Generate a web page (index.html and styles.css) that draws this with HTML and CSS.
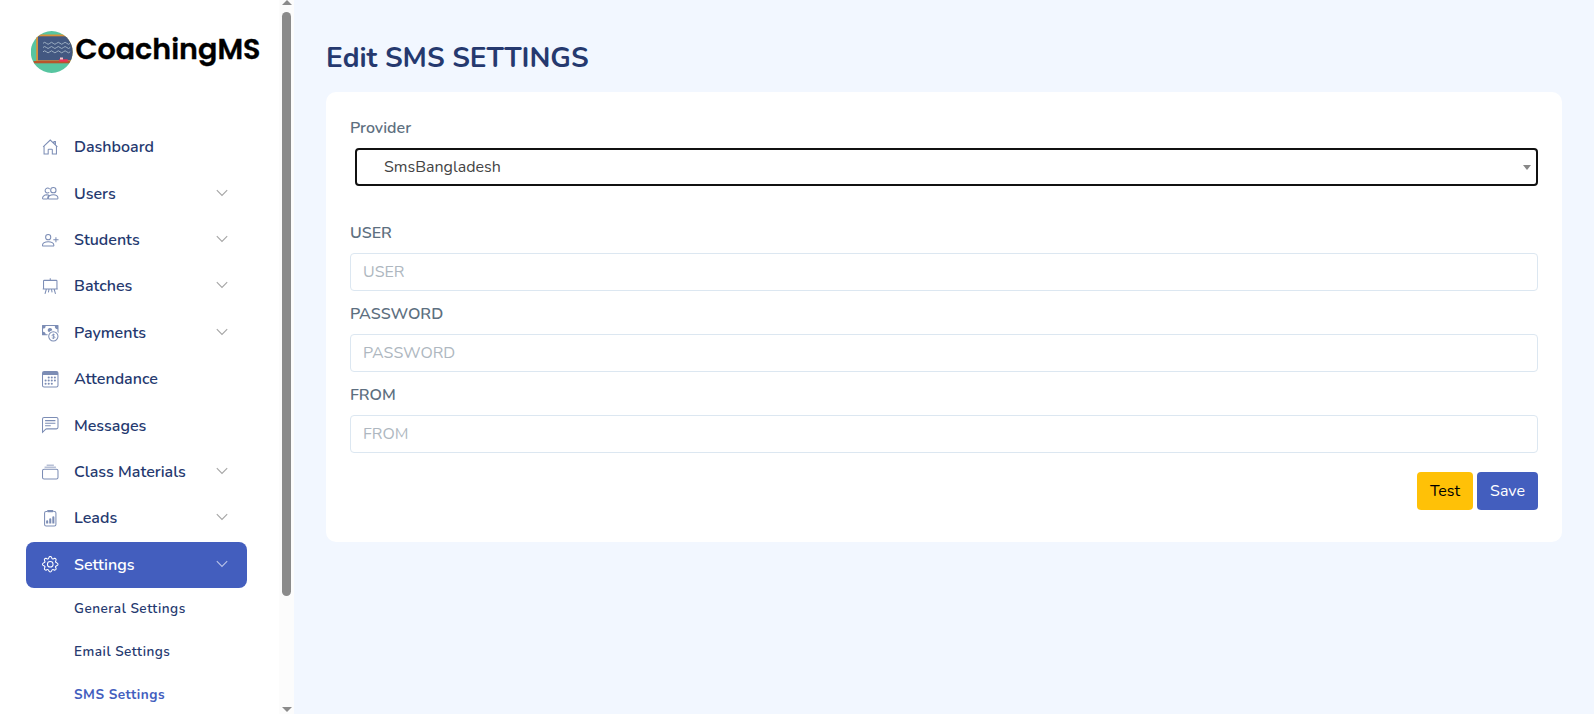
FILE: index.html
```html
<!DOCTYPE html>
<html lang="en">
<head>
<meta charset="utf-8">
<title>Edit SMS Settings - CoachingMS</title>
<link rel="stylesheet" href="styles.css">
</head>
<body>
<div class="app">
  <aside class="sidebar">
    <div class="side-content">
      <svg class="logo" width="232" height="44" viewBox="0 0 232 44">
        <defs><clipPath id="badge"><circle cx="20.700" cy="21" r="20.900"/></clipPath></defs>
        <g clip-path="url(#badge)">
          <rect width="42" height="42" fill="#57c5a0"/>
          <rect x="5.2" y="3.5" width="40" height="28" fill="#d99138"/>
          <rect x="7" y="5.300" width="38" height="24" fill="#435881"/>
          <rect x="2.500" y="30" width="36.500" height="2.300" fill="#b8552b"/>
          <rect x="28.200" y="28.300" width="8.500" height="2.400" fill="#ee3158"/>
          <rect x="29" y="26.500" width="3" height="2" fill="#f6c2ca"/>
          <path d="M12 12.300q1.700-2 3.400 0t3.400 0 3.400 0 3.400 0 3.400 0 3.400 0 3.400 0 3.400 0M12 16.500q1.700-2 3.400 0t3.400 0 3.400 0 3.400 0 3.400 0 3.400 0 3.400 0 3.400 0M12 20.800q1.700-2 3.400 0t3.400 0 3.400 0 3.400 0 3.400 0 3.400 0 3.400 0 3.400 0" fill="none" stroke="#9dafc2" stroke-width="1"/>
        </g>
        <text class="brand" x="44.500" y="28.400" textLength="185" lengthAdjust="spacingAndGlyphs">CoachingMS</text>
      </svg>
      <nav class="menu">
        <a class="item"><svg class="icon" viewBox="0 0 16 16"><path class="line" d="M1.100 7.600 8 1l6.900 6.600M2 6.800v7.700h4v-4q0-.6.600-.6h2.800q.6 0 .6.600v4h4V6.800M11.600 4V2.500h1.400v2.900"/></svg><span>Dashboard</span></a>
        <a class="item"><svg class="icon" viewBox="0 0 16 16"><g class="line"><circle cx="11" cy="5" r="2.600"/><path d="M6.500 13.500q-.5 0-.4-.8C6.400 10.700 8.500 9.500 11 9.500s4.300 1.200 4.500 3.200q0 .8-.5.800zM5.500 13.500H1q-.5 0-.5-.8C.8 10.800 2.300 9.600 4.600 9.400q1.300 0 2.200.5M7 7.200a2.400 2.400 0 1 1 .4-3.200M5.500 13.500q-.5-2 1.600-3.600"/></g></svg><span>Users</span><svg class="chev" viewBox="0 0 12 12"><path d="m.8 3.200 5.200 5.200 5.200-5.200"/></svg></a>
        <a class="item"><svg class="icon" viewBox="0 0 16 16"><g class="line"><circle cx="6" cy="5" r="2.500"/><path d="M1 13.500q-.6 0-.5-.9C.8 10.700 3.200 9.500 6 9.500s5.200 1.200 5.500 3.100q.1.900-.5.900zM13.500 5v5M11 7.500h5"/></g></svg><span>Students</span><svg class="chev" viewBox="0 0 12 12"><path d="m.8 3.200 5.200 5.200 5.200-5.200"/></svg></a>
        <a class="item"><svg class="icon" viewBox="0 0 16 16"><path class="line" d="M1.500 3q0-.7.700-.7h11.600q.7 0 .7.700v7q0 .7-.7.700H2.200q-.7 0-.7-.7zM8 .3v2M.7 10.700h14.600M4.200 10.900 2.900 15.300M6.800 10.900l-.6 3M9.200 10.900l.6 3M11.800 10.900l1.300 4.400"/></svg><span>Batches</span><svg class="chev" viewBox="0 0 12 12"><path d="m.8 3.200 5.200 5.200 5.200-5.200"/></svg></a>
        <a class="item"><svg class="icon" viewBox="0 0 16 16"><path d="M0 .5q0-.5.500-.5h15q.5 0 .5.500v7.400a6 6 0 0 0-1-1.100V4a2.500 2.500 0 0 1-2.500-3H3.500A2.500 2.500 0 0 1 1 3.500v3A2.500 2.500 0 0 1 3.500 9h2l-.3 1H.5Q0 10 0 9.500z"/><path d="M8 3a2.200 2.200 0 0 1 2 2.100A6 6 0 0 0 6.800 7 2.100 2.100 0 0 1 8 3"/><circle class="line" cx="11" cy="11" r="4.500"/><path class="line thin" d="M12.500 9.800C12 8.900 9.700 9 9.800 10.100c.2 1.100 2.700.6 2.700 1.900 0 1.100-2.500 1.100-3 .1M11.100 8.400v5.200"/></svg><span>Payments</span><svg class="chev" viewBox="0 0 12 12"><path d="m.8 3.200 5.200 5.200 5.200-5.200"/></svg></a>
        <a class="item"><svg class="icon" viewBox="0 0 16 16"><path fill-rule="evenodd" d="M2 0h12a2 2 0 0 1 2 2v12a2 2 0 0 1-2 2H2a2 2 0 0 1-2-2V2a2 2 0 0 1 2-2M1 3.900v10.200q0 .9 1 .9h12q1 0 1-.9V3.900z"/><g><circle cx="6.500" cy="6.300" r="1"/><circle cx="9.500" cy="6.300" r="1"/><circle cx="12.500" cy="6.300" r="1"/><circle cx="3.500" cy="9.300" r="1"/><circle cx="6.500" cy="9.300" r="1"/><circle cx="9.500" cy="9.300" r="1"/><circle cx="12.500" cy="9.300" r="1"/><circle cx="3.500" cy="12.300" r="1"/><circle cx="6.500" cy="12.300" r="1"/><circle cx="9.500" cy="12.300" r="1"/></g></svg><span>Attendance</span></a>
        <a class="item"><svg class="icon" viewBox="0 0 16 16"><path class="line" d="M.5 2Q.5.500 2 .5h12Q15.500.5 15.500 2v8q0 1.500-1.500 1.500H4.400q-.6 0-1 .4L.5 14.800zM3 3.500h10M3 6h10M3 8.500h5.500"/></svg><span>Messages</span></a>
        <a class="item"><svg class="icon" viewBox="0 0 16 16"><path class="line" d="M.5 6.500Q.5 5 2 5h12q1.500 0 1.500 1.500V13q0 1.500-1.500 1.500H2Q.5 14.500.5 13z"/><path class="line pale" d="M4.500 1.300h7M2.500 3.200h11"/></svg><span>Class Materials</span><svg class="chev" viewBox="0 0 12 12"><path d="m.8 3.200 5.200 5.200 5.200-5.200"/></svg></a>
        <a class="item"><svg class="icon" viewBox="0 0 16 16"><path class="line" d="M5 1.500H4Q2.500 1.500 2.500 3v11q0 1.500 1.500 1.500h8q1.500 0 1.500-1.500V3q0-1.500-1.500-1.500h-1"/><path d="M5.500 0h5q.5 0 .5.500v1q0 .7-.7.700H5.700Q5 2.200 5 1.500v-1Q5 0 5.500 0M4 11a1 1 0 1 1 2 0v2H4zM7 9a1 1 0 1 1 2 0v4H7zM10 7a1 1 0 1 1 2 0v6h-2z"/></svg><span>Leads</span><svg class="chev" viewBox="0 0 12 12"><path d="m.8 3.200 5.200 5.200 5.200-5.200"/></svg></a>
        <a class="item active"><svg class="icon" viewBox="0 0 16 16"><path d="M8 4.754a3.246 3.246 0 1 0 0 6.492 3.246 3.246 0 0 0 0-6.492zM5.754 8a2.246 2.246 0 1 1 4.492 0 2.246 2.246 0 0 1-4.492 0z"/><path d="M9.796 1.343c-.527-1.790-3.065-1.790-3.592 0l-.094.319a.873.873 0 0 1-1.255.520l-.292-.160c-1.640-.892-3.433.902-2.540 2.541l.159.292a.873.873 0 0 1-.520 1.255l-.319.094c-1.790.527-1.790 3.065 0 3.592l.319.094a.873.873 0 0 1 .520 1.255l-.160.292c-.892 1.640.901 3.434 2.541 2.540l.292-.159a.873.873 0 0 1 1.255.520l.094.319c.527 1.790 3.065 1.790 3.592 0l.094-.319a.873.873 0 0 1 1.255-.520l.292.160c1.640.893 3.434-.902 2.540-2.541l-.159-.292a.873.873 0 0 1 .520-1.255l.319-.094c1.790-.527 1.790-3.065 0-3.592l-.319-.094a.873.873 0 0 1-.520-1.255l.160-.292c.893-1.640-.902-3.433-2.541-2.540l-.292.159a.873.873 0 0 1-1.255-.520l-.094-.319zm-2.633.283c.246-.835 1.428-.835 1.674 0l.094.319a1.873 1.873 0 0 0 2.693 1.115l.291-.160c.764-.415 1.600.420 1.184 1.185l-.159.292a1.873 1.873 0 0 0 1.116 2.692l.318.094c.835.246.835 1.428 0 1.674l-.319.094a1.873 1.873 0 0 0-1.115 2.693l.160.291c.415.764-.420 1.600-1.185 1.184l-.291-.159a1.873 1.873 0 0 0-2.693 1.116l-.094.318c-.246.835-1.428.835-1.674 0l-.094-.319a1.873 1.873 0 0 0-2.692-1.115l-.292.160c-.764.415-1.600-.420-1.184-1.185l.159-.291A1.873 1.873 0 0 0 1.945 8.930l-.319-.094c-.835-.246-.835-1.428 0-1.674l.319-.094A1.873 1.873 0 0 0 3.060 4.377l-.160-.292c-.415-.764.420-1.600 1.185-1.184l.292.159a1.873 1.873 0 0 0 2.692-1.115l.094-.319z"/></svg><span>Settings</span><svg class="chev" viewBox="0 0 12 12"><path d="m.8 3.200 5.200 5.200 5.200-5.200"/></svg></a>
      </nav>
      <nav class="submenu">
        <a>General Settings</a>
        <a>Email Settings</a>
        <a class="current">SMS Settings</a>
      </nav>
    </div>
    <div class="scrollbar"><i class="up"></i><i class="thumb"></i><i class="down"></i></div>
  </aside>
  <main class="main">
    <h1>Edit SMS SETTINGS</h1>
    <form class="card">
      <label class="provider-label">Provider</label>
      <div class="select"><span>SmsBangladesh</span><i></i></div>
      <label>USER</label>
      <input type="text" placeholder="USER">
      <label>PASSWORD</label>
      <input type="text" placeholder="PASSWORD">
      <label>FROM</label>
      <input type="text" placeholder="FROM">
      <div class="actions">
        <button type="button" class="test">Test</button>
        <button type="button" class="save">Save</button>
      </div>
    </form>
  </main>
</div>
</body>
</html>
```
FILE: styles.css
```css
* { box-sizing: border-box; }
body { margin: 0; background: #fff; font-family: Nunito, Lato, sans-serif; font-size: 16px; line-height: 24px; color: #5d6f80; overflow: hidden; }
.app { display: flex; height: 714px; }
.sidebar { display: flex; width: 294px; background: #fff; }
.side-content { width: 279px; padding: 31px 0 0 26px; overflow: hidden; }
.logo { display: block; margin-left: 5px; }
.brand { font-family: Poppins, Inter, sans-serif; font-weight: 600; font-size: 28px; fill: #000; stroke: #000; stroke-width: .3px; }
.menu { width: 221px; margin-top: 49px; }
.item { display: flex; align-items: center; height: 46.4px; padding: 0 19px 0 15.500px; border-radius: 8px; color: #25396f; font-weight: 600; }
.item span { flex: 1; margin-left: 16px; }
.icon { width: 16.500px; height: 16.500px; fill: #7c8db5; color: #7c8db5; overflow: visible; }
.line { fill: none; stroke: currentColor; stroke-width: 1; }
.thin { stroke-width: .8; }
.pale { opacity: .55; stroke-width: 1.500; }
.chev { width: 12px; height: 12px; margin-bottom: 2px; fill: none; stroke: #a5a5a5; stroke-width: 1.100; }
.active { background: #435ebe; color: #fff; }
.active .icon { fill: #fff; color: #fff; }
.active .chev { stroke: #b9c3e8; }
.submenu { display: flex; flex-direction: column; padding-left: 48px; }
.submenu a { height: 43px; line-height: 41px; font-size: 13.600px; font-weight: 600; letter-spacing: .5px; color: #25396f; }
.submenu .current { color: #435ebe; font-weight: 700; }
.scrollbar { display: flex; flex-direction: column; align-items: center; width: 15px; padding: 0 0 2px; background: #fcfcfc; }
.up, .down { border: 5px solid transparent; border-top: 0; border-bottom: 5px solid #8b8b8b; }
.down { margin-top: auto; border-bottom: 0; border-top: 5px solid #8b8b8b; }
.thumb { width: 9px; height: 584px; margin-top: 7px; border-radius: 5px; background: #8b8b8b; }
.main { flex: 1; height: 714px; padding: 41px 32px 0; background: #f2f7ff; }
h1 { margin: 0; height: 51px; line-height: 34px; font-size: 28px; font-weight: 700; color: #25396f; }
.card { display: flex; flex-direction: column; height: 450px; padding: 24px; border-radius: 10px; background: #fff; }
label { height: 24px; margin-bottom: 8px; font-weight: 600; }
.select { display: flex; align-items: center; height: 38px; margin: 0 0 35px 5px; padding: 0 5px 0 27px; border: 2px solid #111; border-radius: 4px; color: #444; }
.select i { margin-left: auto; border: 4px solid transparent; border-top: 5px solid #888; border-bottom: 0; }
input { height: 38px; margin: 0 0 11px; padding: 0 12px; border: 1px solid #dce7f1; border-radius: 4px; font: inherit; outline: 0; }
input::placeholder { color: #aeb7c0; opacity: 1; }
.actions { display: flex; justify-content: flex-end; gap: 4px; margin-top: 8px; }
button { height: 38px; padding: 0; border: 0; border-radius: 4px; font: inherit; }
.test { width: 56px; background: #ffc107; color: #000; }
.save { width: 61px; background: #435ebe; color: #fff; }
```
